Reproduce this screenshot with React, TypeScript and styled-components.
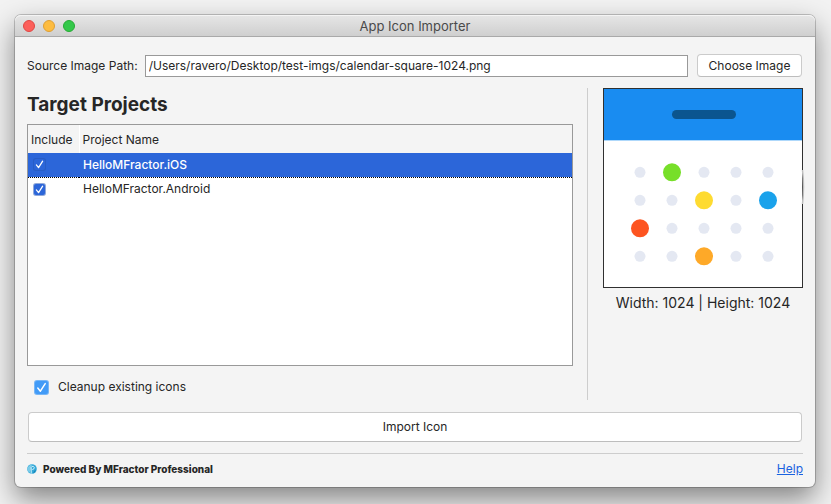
import React, { useState } from 'react';
import styled, { createGlobalStyle, css } from 'styled-components';

const GlobalStyle = createGlobalStyle`
  * { box-sizing: border-box; }
  html, body, #root { height: 100%; }
  body {
    margin: 0;
    background: #f2f2f2;
    color: #262626;
    font: 12px/16px Inter, "Liberation Sans", sans-serif;
    overflow: hidden;
  }
  button, input { font: inherit; color: inherit; }
`;

const Desktop = styled.div`
  display: flex;
  height: 100%;
  padding: 15px 16px 17px 15px;
`;

const Window = styled.main`
  flex: 1;
  display: flex;
  flex-direction: column;
  min-width: 0;
  border-radius: 6px;
  background: #f4f4f4;
  box-shadow: 0 0 0 1px rgba(0, 0, 0, 0.2), 0 12px 28px rgba(0, 0, 0, 0.46);
`;

const TitleBar = styled.header`
  display: grid;
  grid-template-columns: 1fr auto 1fr;
  align-items: center;
  height: 22px;
  padding: 0 8px;
  border-bottom: 1px solid #a9a9a9;
  border-radius: 6px 6px 0 0;
  background: linear-gradient(#e6e6e6, #cfcfcf);
  box-shadow: inset 0 1px #f4f4f4;
`;

const Lights = styled.div`
  display: flex;
  gap: 8px;
`;

const Light = styled.button<{ $fill: string; $edge: string }>`
  width: 12px;
  height: 12px;
  padding: 0;
  border: 1px solid ${(p) => p.$edge};
  border-radius: 50%;
  background: ${(p) => p.$fill};
`;

const Title = styled.h1`
  margin: 0;
  color: #4a4a4a;
  font-size: 13px;
  font-weight: 400;
`;

const Content = styled.form`
  flex: 1;
  display: flex;
  flex-direction: column;
  min-height: 0;
  padding: 17px 12px 10px;
`;

const SourceRow = styled.div`
  display: flex;
  align-items: center;
  gap: 7px;
  padding-right: 1px;
`;

const PathInput = styled.input`
  flex: 1;
  min-width: 0;
  height: 22px;
  padding: 0 3px;
  border: 1px solid #999;
  background: #fff;
  outline: none;
`;

const PushButton = styled.button<{ $wide?: boolean }>`
  height: 23px;
  min-width: 105px;
  padding: 0 10px;
  border: 1px solid #cbcbcb;
  border-bottom-color: #bdbdbd;
  border-radius: 4px;
  background: #fff;
  ${(p) =>
    p.$wide
      ? css`
          height: 30px;
          margin: 12px 1px 0;
        `
      : css`
          margin-left: 2px;
        `}
`;

const Panels = styled.div`
  flex: 1;
  display: flex;
  min-height: 0;
  margin-top: 11px;
`;

const Projects = styled.section`
  flex: 1;
  display: flex;
  flex-direction: column;
  min-width: 0;
  padding-right: 14px;
  border-right: 1px solid #cdcdcd;
`;

const Heading = styled.h2`
  margin: 0;
  padding: 5px 0 7px;
  font-size: 19px;
  font-weight: 700;
  line-height: 24px;
`;

const TableFrame = styled.div`
  flex: 1;
  min-height: 0;
  border: 1px solid #999;
  background: #fff;
`;

const Table = styled.table`
  width: 100%;
  border-collapse: collapse;
  table-layout: fixed;
`;

const HeadCell = styled.th<{ $narrow?: boolean }>`
  height: 28px;
  padding: 2px 3px 0;
  background: #f4f4f4;
  font-weight: 400;
  text-align: left;
  ${(p) => p.$narrow && 'width: 51px; border-right: 1px solid #fff;'}
`;

const Row = styled.tr<{ $selected: boolean }>`
  height: 24px;
  ${(p) =>
    p.$selected &&
    css`
      border-bottom: 1px dotted #000;
      background: #2c66d9;
      color: #fff;
      font-weight: 500;
    `}
`;

const Cell = styled.td`
  padding: 0 4px;
`;

const CheckWrap = styled.span<{ $large?: boolean }>`
  display: grid;
  width: ${(p) => (p.$large ? 13 : 11)}px;
  height: ${(p) => (p.$large ? 13 : 11)}px;
  margin-left: 2px;
  & > * {
    grid-area: 1 / 1;
    width: 100%;
    height: 100%;
    margin: 0;
  }
  svg { pointer-events: none; }
`;

const CheckInput = styled.input<{ $large?: boolean }>`
  appearance: none;
  border-radius: 2px;
  background: #fff;
  box-shadow: 0 0 0 1px #b9b9b9;
  &:checked {
    background: ${(p) => (p.$large ? '#429bf7' : '#2c66d9')};
    box-shadow: 0 0 0 1px ${(p) => (p.$large ? 'rgba(66, 155, 247, 0.7)' : 'rgba(36, 84, 180, 0.5)')};
  }
  &:not(:checked) + svg { display: none; }
`;

const CleanupLabel = styled.label`
  display: flex;
  align-items: center;
  gap: 10px;
  padding: 13px 0 5px 6px;
`;

const Preview = styled.figure`
  width: 215px;
  margin: 0;
  padding-left: 15px;
`;

const Picture = styled.svg`
  display: block;
  width: 100%;
  overflow: visible;
`;

const Caption = styled.figcaption`
  padding-top: 7px;
  font-size: 14px;
  text-align: center;
  white-space: nowrap;
`;

const Footer = styled.footer`
  display: flex;
  align-items: center;
  gap: 6px;
  margin-top: 11px;
  padding-top: 7px;
  border-top: 1px solid #cdcdcd;
`;

const Powered = styled.strong`
  flex: 1;
  font-size: 10px;
  font-weight: 800;
  line-height: 14px;
`;

const HelpLink = styled.a`
  color: #1a62e0;
`;

function CheckBox({ large, ...rest }: { large?: boolean } & React.InputHTMLAttributes<HTMLInputElement>) {
  return (
    <CheckWrap $large={large}>
      <CheckInput type="checkbox" $large={large} {...rest} />
      <svg viewBox="0 0 14 14" fill="none" stroke="#fff" strokeWidth="1.6" strokeLinecap="round" strokeLinejoin="round" aria-hidden="true">
        <path d="M3 7.6 5.8 11 11 2.8" />
      </svg>
    </CheckWrap>
  );
}

const accents: Record<string, string> = {
  '1-0': '#77df29',
  '2-1': '#fedb31',
  '4-1': '#1aa2eb',
  '0-2': '#fd5420',
  '2-3': '#fea928',
};

function CalendarPicture() {
  const dots = [];
  for (let row = 0; row < 4; row++) {
    for (let col = 0; col < 5; col++) {
      const accent = accents[`${col}-${row}`];
      dots.push(
        <circle key={`${col}-${row}`} cx={37 + col * 32} cy={84.3 + row * 28} r={accent ? 9 : 5.5} fill={accent ?? '#e4e8f2'} />,
      );
    }
  }
  return (
    <Picture viewBox="0 0 200 200" role="img" aria-label="Calendar icon">
      <rect x="0.5" y="0.5" width="199" height="199" fill="#fff" stroke="#303030" />
      <path d="M199.5 82Q201.5 99 199.5 116" fill="none" stroke="#c0c0c0" strokeWidth="1.5" />
      <rect x="1" y="1" width="198" height="51" fill="#198cf1" />
      <rect x="1" y="52" width="198" height="1" fill="#aed8fb" />
      <rect x="69" y="22" width="64" height="9" rx="4.5" fill="#0b558f" />
      {dots}
    </Picture>
  );
}

function BrandMark() {
  return (
    <svg width="10" height="10" viewBox="0 0 10 10" aria-hidden="true">
      <circle cx="5" cy="5" r="4.8" fill="#35a9d8" />
      <path d="M1 3Q2.5 0.8 5 0.3L4 5 2.5 8.8Q0 7 0.2 4.5Z" fill="#7acbe8" />
      <path d="M4.2 9.5V3.4Q4.8 2 6.5 2.4 7.7 3 7 4.7L5.3 5.6" fill="none" stroke="#d6f2fb" strokeWidth="1" />
      <path d="M7 7 9 5.5Q8.8 8.5 6 9.5Z" fill="#1686b8" />
    </svg>
  );
}

const initialProjects = [
  { name: 'HelloMFractor.iOS', include: true },
  { name: 'HelloMFractor.Android', include: true },
];

export default function App() {
  const [projects, setProjects] = useState(initialProjects);
  const [selected, setSelected] = useState(0);
  const toggle = (index: number) =>
    setProjects((list) => list.map((p, i) => (i === index ? { ...p, include: !p.include } : p)));

  return (
    <Desktop>
      <GlobalStyle />
      <Window>
        <TitleBar>
          <Lights>
            <Light $fill="#fc605b" $edge="#df4744" aria-label="Close" />
            <Light $fill="#fdbc40" $edge="#de9f34" aria-label="Minimize" />
            <Light $fill="#34c84a" $edge="#27aa35" aria-label="Zoom" />
          </Lights>
          <Title>App Icon Importer</Title>
        </TitleBar>
        <Content onSubmit={(e) => e.preventDefault()}>
          <SourceRow>
            <label htmlFor="path">Source Image Path:</label>
            <PathInput id="path" spellCheck={false} defaultValue="/Users/ravero/Desktop/test-imgs/calendar-square-1024.png" />
            <PushButton type="button">Choose Image</PushButton>
          </SourceRow>
          <Panels>
            <Projects>
              <Heading>Target Projects</Heading>
              <TableFrame>
                <Table>
                  <thead>
                    <tr>
                      <HeadCell $narrow>Include</HeadCell>
                      <HeadCell>Project Name</HeadCell>
                    </tr>
                  </thead>
                  <tbody>
                    {projects.map((p, i) => (
                      <Row key={p.name} $selected={i === selected} onClick={() => setSelected(i)}>
                        <Cell>
                          <CheckBox checked={p.include} onChange={() => toggle(i)} aria-label={`Include ${p.name}`} />
                        </Cell>
                        <Cell>{p.name}</Cell>
                      </Row>
                    ))}
                  </tbody>
                </Table>
              </TableFrame>
              <CleanupLabel>
                <CheckBox large defaultChecked />
                Cleanup existing icons
              </CleanupLabel>
            </Projects>
            <Preview>
              <CalendarPicture />
              <Caption>Width: 1024 | Height: 1024</Caption>
            </Preview>
          </Panels>
          <PushButton $wide type="submit">Import Icon</PushButton>
          <Footer>
            <BrandMark />
            <Powered>Powered By MFractor Professional</Powered>
            <HelpLink href="#help">Help</HelpLink>
          </Footer>
        </Content>
      </Window>
    </Desktop>
  );
}
